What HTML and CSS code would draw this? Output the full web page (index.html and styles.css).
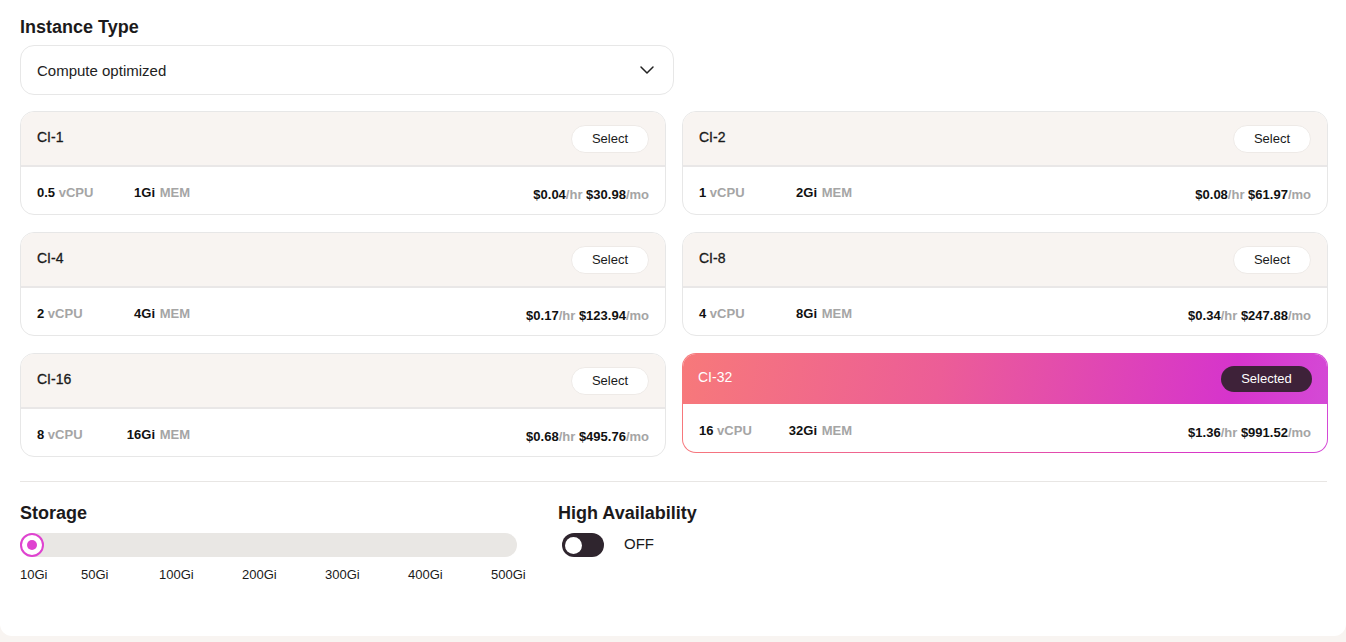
FILE: index.html
```html
<!DOCTYPE html>
<html lang="en">
<head>
<meta charset="utf-8">
<title>Instance Type</title>
<link rel="stylesheet" href="styles.css">
</head>
<body>
<div class="panel">
  <h2 class="section-title">Instance Type</h2>
  <div class="dropdown">
    <span>Compute optimized</span>
    <svg class="chevron" width="16" height="16" viewBox="0 0 16 16"><path d="M2 5l6 6 6-6" fill="none" stroke="#222" stroke-width="1.5" stroke-linecap="round" stroke-linejoin="round"/></svg>
  </div>

  <div class="grid">
    <div class="card">
      <div class="card-head"><span class="name">CI-1</span><button class="btn">Select</button></div>
      <div class="card-body">
        <div class="specs"><span><b>0.5</b> <i>vCPU</i></span><span class="mem"><b>1Gi</b> <i>MEM</i></span></div>
        <div class="price"><b>$0.04</b><i>/hr</i> <b>$30.98</b><i>/mo</i></div>
      </div>
    </div>
    <div class="card">
      <div class="card-head"><span class="name">CI-2</span><button class="btn">Select</button></div>
      <div class="card-body">
        <div class="specs"><span><b>1</b> <i>vCPU</i></span><span class="mem"><b>2Gi</b> <i>MEM</i></span></div>
        <div class="price"><b>$0.08</b><i>/hr</i> <b>$61.97</b><i>/mo</i></div>
      </div>
    </div>
    <div class="card">
      <div class="card-head"><span class="name">CI-4</span><button class="btn">Select</button></div>
      <div class="card-body">
        <div class="specs"><span><b>2</b> <i>vCPU</i></span><span class="mem"><b>4Gi</b> <i>MEM</i></span></div>
        <div class="price"><b>$0.17</b><i>/hr</i> <b>$123.94</b><i>/mo</i></div>
      </div>
    </div>
    <div class="card">
      <div class="card-head"><span class="name">CI-8</span><button class="btn">Select</button></div>
      <div class="card-body">
        <div class="specs"><span><b>4</b> <i>vCPU</i></span><span class="mem"><b>8Gi</b> <i>MEM</i></span></div>
        <div class="price"><b>$0.34</b><i>/hr</i> <b>$247.88</b><i>/mo</i></div>
      </div>
    </div>
    <div class="card">
      <div class="card-head"><span class="name">CI-16</span><button class="btn">Select</button></div>
      <div class="card-body">
        <div class="specs"><span><b>8</b> <i>vCPU</i></span><span class="mem"><b>16Gi</b> <i>MEM</i></span></div>
        <div class="price"><b>$0.68</b><i>/hr</i> <b>$495.76</b><i>/mo</i></div>
      </div>
    </div>
    <div class="card selected">
      <div class="card-inner">
        <div class="card-head"><span class="name">CI-32</span><button class="btn btn-dark">Selected</button></div>
        <div class="card-body">
          <div class="specs"><span><b>16</b> <i>vCPU</i></span><span class="mem"><b>32Gi</b> <i>MEM</i></span></div>
          <div class="price"><b>$1.36</b><i>/hr</i> <b>$991.52</b><i>/mo</i></div>
        </div>
      </div>
    </div>
  </div>

  <hr class="divider">

  <div class="options">
    <div class="storage">
      <h3 class="sub-title">Storage</h3>
      <div class="track"><span class="thumb"></span></div>
      <div class="ticks">
        <span>10Gi</span><span>50Gi</span><span>100Gi</span><span>200Gi</span><span>300Gi</span><span>400Gi</span><span>500Gi</span>
      </div>
    </div>
    <div class="ha">
      <h3 class="sub-title">High Availability</h3>
      <div class="toggle-row">
        <span class="toggle"><span class="knob"></span></span>
        <span class="off">OFF</span>
      </div>
    </div>
  </div>
</div>
</body>
</html>
```

FILE: styles.css
```css
* { box-sizing: border-box; }
html, body { margin: 0; padding: 0; }
body {
  background: #f8f4f1;
  font-family: "Liberation Sans", Arial, sans-serif;
  color: #1c1a1b;
  height: 642px;
  overflow: hidden;
}
.panel {
  background: #fff;
  width: 1346px;
  height: 636px;
  border-radius: 0 0 12px 12px;
  padding: 16px 19px 0 20px;
}
.section-title {
  margin: 0;
  font-size: 18px;
  line-height: 22px;
  font-weight: bold;
}
.dropdown {
  margin-top: 7px;
  width: 654px;
  height: 50px;
  border: 1px solid #e7e7e7;
  border-radius: 14px;
  display: flex;
  align-items: center;
  justify-content: space-between;
  padding: 0 18px 0 16px;
  font-size: 15px;
  color: #222;
}
.chevron { display: block; }
.grid {
  margin-top: 16px;
  display: grid;
  grid-template-columns: 646px 646px;
  column-gap: 16px;
  row-gap: 17px;
  align-items: start;
}
.card {
  height: 104px;
  border: 1px solid #e7e7e7;
  border-radius: 14px;
  overflow: hidden;
  background: #fff;
}
.card-head {
  height: 55px;
  background: #f8f4f1;
  border-bottom: 2px solid #e9e7e7;
  display: flex;
  align-items: center;
  justify-content: space-between;
  padding: 0 16px 0 16px;
}
.name {
  font-size: 14px;
  color: #1a1a1a;
  -webkit-text-stroke: 0.3px #1a1a1a;
  margin-top: -3px;
}
.btn {
  font-family: "Liberation Sans", Arial, sans-serif;
  font-size: 13px;
  color: #1a1a1a;
  background: #fff;
  border: 1px solid #eeeae7;
  border-radius: 14px;
  width: 78px;
  height: 28px;
  padding: 0;
}
.card-body {
  height: 47px;
  display: flex;
  align-items: center;
  justify-content: space-between;
  padding: 4px 16px 0 16px;
  font-size: 13px;
  font-weight: bold;
}
.card-body b { font-weight: bold; color: #111; }
.card-body i { font-style: normal; color: #a5a5a5; }
.specs {
  display: grid;
  grid-template-columns: 78px 75px;
}
.specs .mem { text-align: right; }
.specs .mem i { margin-left: 1px; }
.price { margin-top: 4px; }

.card.selected {
  height: 100px;
  border: none;
  padding: 1px;
  background: linear-gradient(100deg, #f7797a 0%, #ec5d97 40%, #d634cc 85%, #d44ad6 100%);
}
.card-inner {
  height: 98px;
  border-radius: 13px;
  overflow: hidden;
  background: #fff;
}
.selected .card-head {
  height: 51px;
  margin: -1px -1px 0 -1px;
  background: linear-gradient(100deg, #f7797a 0%, #ec5d97 40%, #d634cc 85%, #d44ad6 100%);
  border-bottom: none;
}
.selected .name { color: #fff; -webkit-text-stroke: 0; font-size: 14px; }
.btn-dark {
  background: #3e2239;
  color: #fff;
  border: none;
  width: 91px;
  height: 26px;
}
.selected .card-body { height: 50px; padding-top: 2px; }

.divider {
  border: none;
  border-top: 1px solid #e8e6e4;
  margin: 24px 0 0 0;
  width: 1307px;
}
.options {
  display: flex;
  margin-top: 20px;
}
.storage { width: 538px; }
.sub-title {
  margin: 0;
  font-size: 18px;
  line-height: 22px;
  font-weight: bold;
}
.track {
  margin-top: 9px;
  width: 497px;
  height: 24px;
  border-radius: 12px;
  background: #e9e7e4;
  display: flex;
  align-items: center;
}
.thumb {
  width: 24px;
  height: 24px;
  border-radius: 50%;
  border: 2px solid #df43d0;
  background: #fff;
  display: flex;
  align-items: center;
  justify-content: center;
}
.thumb::after {
  content: "";
  width: 10px;
  height: 10px;
  border-radius: 50%;
  background: #df43d0;
}
.ticks {
  margin-top: 10px;
  display: grid;
  grid-template-columns: 61px 78px 83px 83px 83px 83px auto;
  font-size: 13px;
  color: #1a1a1a;
}
.toggle-row {
  margin-top: 9px;
  display: flex;
  align-items: center;
  padding-left: 4px;
}
.toggle {
  width: 42px;
  height: 24px;
  border-radius: 12px;
  background: #2f252e;
  display: flex;
  align-items: center;
  padding-left: 3px;
}
.knob {
  width: 17px;
  height: 17px;
  border-radius: 50%;
  background: #fff;
}
.off {
  margin-left: 20px;
  font-size: 15px;
  color: #1a1a1a;
  margin-top: -4px;
}
```
